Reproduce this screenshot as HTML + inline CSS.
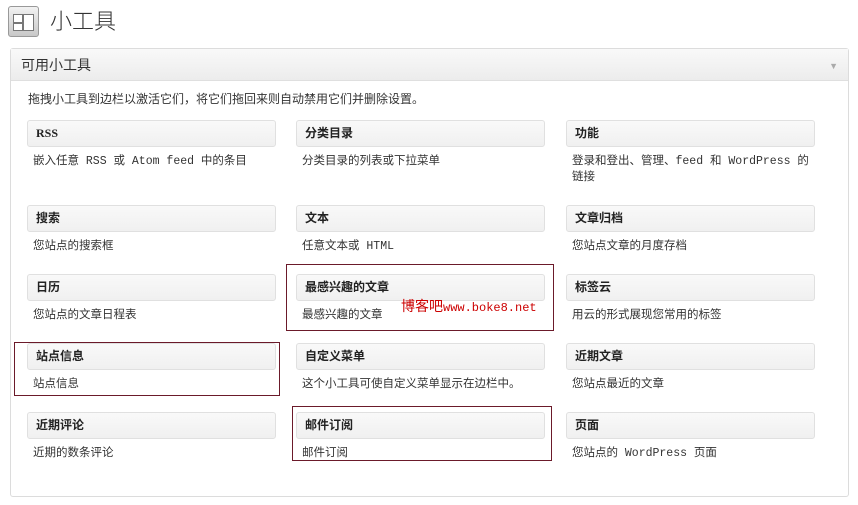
<!DOCTYPE html>
<html><head><meta charset="utf-8"><style>
body{margin:0;width:858px;height:505px;background:#fff;position:relative;font-family:"Liberation Sans","Noto Sans CJK SC",sans-serif;overflow:hidden}
.a{position:absolute}
.icon{left:8px;top:6px;width:29px;height:29px;border:1px solid #999;border-radius:3px;background:linear-gradient(#f2f2f2,#c8c8c8)}
h1{position:absolute;left:50px;top:4px;margin:0;font-weight:300;font-size:22px;color:#333}
.box{left:10px;top:48px;width:837px;height:447px;border:1px solid #dcdcdc;border-radius:3px}
.hd{left:11px;top:49px;width:837px;height:31px;background:linear-gradient(#f9f9f9,#ececec);border-bottom:1px solid #dfdfdf}
.hd span{position:absolute;left:10px;top:6px;font-size:14px;color:#333}
.tri{right:10px;top:12px;font-size:9px;color:#aaa}
.note{left:28px;top:90px;font-size:12px;color:#333}
.w{position:absolute;width:249px}
.t{border:1px solid #e0e0e0;border-radius:3px;background:linear-gradient(#f9f9f9,#f0f0f0);font-size:12px;font-weight:bold;color:#222;line-height:25px;padding-left:8px;box-sizing:border-box;height:27px;font-family:"Liberation Serif","Noto Sans CJK SC",serif}
.d{font-size:11.5px;color:#333;margin:7px 0 0 6px;line-height:16px;font-family:"Liberation Mono","Noto Sans CJK SC",monospace}
.r{position:absolute;border:1px solid #6b1a2a}
</style></head><body>
<div class="a icon"><div class="a" style="left:4px;top:7px;width:8px;height:7px;border:1px solid #777;background:#fff"></div><div class="a" style="left:4px;top:16px;width:8px;height:6px;border:1px solid #777;background:#fff"></div><div class="a" style="left:14px;top:7px;width:9px;height:15px;border:1px solid #777;background:#fff"></div></div>
<h1>小工具</h1>
<div class="a box"></div>
<div class="a hd"><span>可用小工具</span><div class="a tri">▼</div></div>
<div class="a note">拖拽小工具到边栏以激活它们，将它们拖回来则自动禁用它们并删除设置。</div>

<div class="w" style="left:27px;top:120px"><div class="t">RSS</div><div class="d">嵌入任意 RSS 或 Atom feed 中的条目</div></div>
<div class="w" style="left:296px;top:120px"><div class="t">分类目录</div><div class="d">分类目录的列表或下拉菜单</div></div>
<div class="w" style="left:566px;top:120px"><div class="t">功能</div><div class="d">登录和登出、管理、feed 和 WordPress 的<br>链接</div></div>

<div class="w" style="left:27px;top:205px"><div class="t">搜索</div><div class="d">您站点的搜索框</div></div>
<div class="w" style="left:296px;top:205px"><div class="t">文本</div><div class="d">任意文本或 HTML</div></div>
<div class="w" style="left:566px;top:205px"><div class="t">文章归档</div><div class="d">您站点文章的月度存档</div></div>

<div class="w" style="left:27px;top:274px"><div class="t">日历</div><div class="d">您站点的文章日程表</div></div>
<div class="w" style="left:296px;top:274px"><div class="t">最感兴趣的文章</div><div class="d">最感兴趣的文章</div></div>
<div class="w" style="left:566px;top:274px"><div class="t">标签云</div><div class="d">用云的形式展现您常用的标签</div></div>

<div class="w" style="left:27px;top:343px"><div class="t">站点信息</div><div class="d">站点信息</div></div>
<div class="w" style="left:296px;top:343px"><div class="t">自定义菜单</div><div class="d">这个小工具可使自定义菜单显示在边栏中。</div></div>
<div class="w" style="left:566px;top:343px"><div class="t">近期文章</div><div class="d">您站点最近的文章</div></div>

<div class="w" style="left:27px;top:412px"><div class="t">近期评论</div><div class="d">近期的数条评论</div></div>
<div class="w" style="left:296px;top:412px"><div class="t">邮件订阅</div><div class="d">邮件订阅</div></div>
<div class="w" style="left:566px;top:412px"><div class="t">页面</div><div class="d">您站点的 WordPress 页面</div></div>

<div class="a" style="left:401px;top:296px;font-size:14px;color:#c00;font-family:'Liberation Sans','Noto Sans CJK SC',sans-serif">博客吧<span style="font-family:'Liberation Mono',monospace;font-size:12px">www.boke8.net</span></div>
<div class="r" style="left:286px;top:264px;width:266px;height:65px"></div>
<div class="r" style="left:14px;top:342px;width:264px;height:52px"></div>
<div class="r" style="left:292px;top:406px;width:258px;height:53px"></div>
</body></html>
